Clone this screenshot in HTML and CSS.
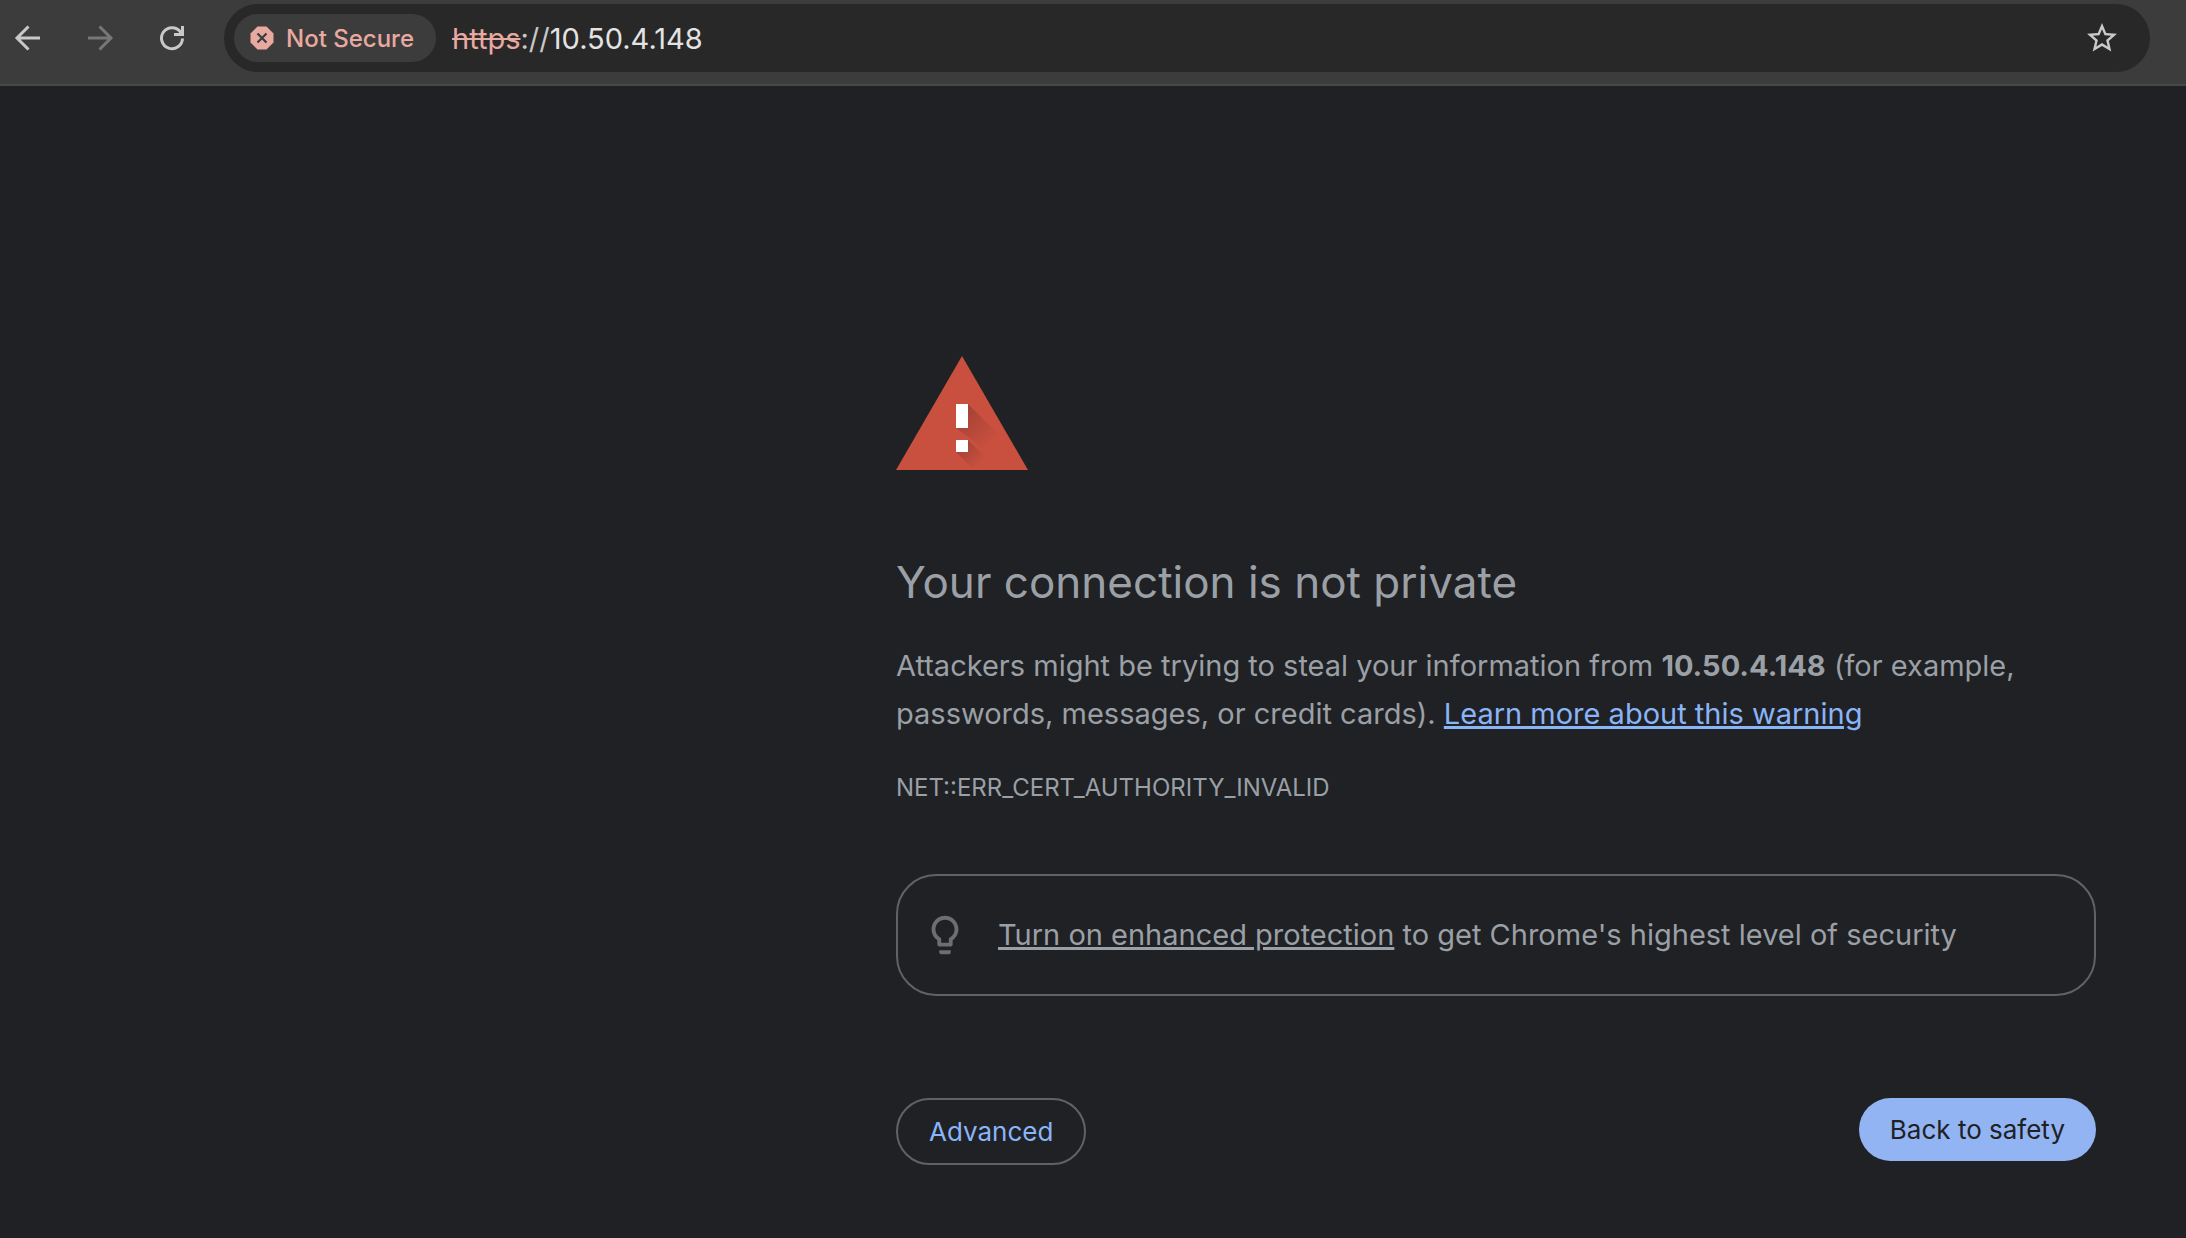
FILE: index.html
```
<!DOCTYPE html>
<html lang="en">
<head>
    <meta charset="UTF-8">
    <meta name="viewport" content="width=device-width, initial-scale=1.0">
    <title>Privacy error</title>
    <link rel="stylesheet" href="styles.css">
</head>

<body>
    <header class="toolbar">
        <nav class="nav-buttons">
            <button class="icon-button" type="button" aria-label="Back">
                <svg viewBox="0 0 36 36"><path d="M30 18H8M18.500 6.500L7 18l11.500 11.500" fill="none" stroke="currentColor" stroke-width="3"/></svg>
            </button>
            <button class="icon-button" type="button" aria-label="Forward" disabled>
                <svg viewBox="0 0 36 36"><path d="M6 18h22M17.500 6.500L29 18 17.500 29.500" fill="none" stroke="currentColor" stroke-width="3"/></svg>
            </button>
            <button class="icon-button" type="button" aria-label="Reload">
                <svg viewBox="0 0 36 36"><path d="M28.500 18.500A10.500 10.500 0 1 1 26.500 12L28 14M28.500 6v8.500H20" fill="none" stroke="currentColor" stroke-width="3"/></svg>
            </button>
        </nav>
        <div class="address-bar">
            <button class="security-chip" type="button">
                <svg class="chip-icon" viewBox="0 0 24 24">
                    <path d="M7.500 .5h9l7 7v9l-7 7h-9l-7-7v-9z" fill="#e8a9a1"/>
                    <path d="M7.500 7.500l9 9M16.500 7.500l-9 9" stroke="#3c3c3c" stroke-width="2.200"/>
                </svg>
                Not Secure
            </button>
            <div class="url" role="textbox" aria-label="Address" tabindex="0"><span class="scheme">https</span><span class="slashes">://</span>10.50.4.148</div>
            <button class="icon-button" type="button" aria-label="Bookmark this page">
                <svg viewBox="0 0 24 24"><path fill="currentColor" d="M22 9.240l-7.190-.62L12 2 9.190 8.630 2 9.240l5.460 4.730L5.820 21 12 17.270 18.180 21l-1.630-7.030L22 9.240zM12 15.400l-3.760 2.270 1-4.280-3.320-2.880 4.380-.38L12 6.100l1.710 4.040 4.380.38-3.320 2.880 1 4.280L12 15.400z"/></svg>
            </button>
        </div>
    </header>

    <main class="interstitial">
        <svg class="warning-icon" viewBox="0 0 132 114" role="img" aria-label="Warning">
            <defs>
                <linearGradient id="shade" gradientUnits="userSpaceOnUse" x1="66" y1="60" x2="94" y2="88">
                    <stop offset="0" stop-color="#8f3a30" stop-opacity=".6"/>
                    <stop offset="1" stop-color="#8f3a30" stop-opacity="0"/>
                </linearGradient>
                <linearGradient id="shade-dot" gradientUnits="userSpaceOnUse" x1="66" y1="90" x2="84" y2="108">
                    <stop offset="0" stop-color="#8f3a30" stop-opacity=".6"/>
                    <stop offset="1" stop-color="#8f3a30" stop-opacity="0"/>
                </linearGradient>
            </defs>
            <path d="M66 0l66 114H0z" fill="#c9503f"/>
            <path d="M72 48l36 36v24L60 72z" fill="url(#shade)"/>
            <path d="M72 84l30 30H78L60 96z" fill="url(#shade-dot)"/>
            <path d="M60 48h12v24H60zM60 84h12v12H60z" fill="#fff"/>
        </svg>

        <h1>Your connection is not private</h1>
        <p class="message">Attackers might be trying to steal your information from <strong>10.50.4.148</strong> (for example, passwords, messages, or credit cards). <a class="learn-more" href="#">Learn more about this warning</a></p>
        <div class="error-code">NET::ERR_CERT_AUTHORITY_INVALID</div>

        <div class="promo">
            <svg class="bulb" viewBox="0 0 24 24"><path fill="currentColor" d="M9 21c0 .5.4 1 1 1h4c.6 0 1-.5 1-1v-1H9v1zm3-19C8.100 2 5 5.100 5 9c0 2.400 1.200 4.500 3 5.700V17c0 .5.4 1 1 1h6c.6 0 1-.5 1-1v-2.300c1.800-1.300 3-3.400 3-5.700 0-3.900-3.100-7-7-7zm2.900 11.100l-.9.6V16h-4v-2.300l-.9-.6C7.800 12.200 7 10.600 7 9c0-2.800 2.200-5 5-5s5 2.200 5 5c0 1.600-.8 3.200-2.100 4.100z"/></svg>
            <p><a href="#">Turn on enhanced protection</a> to get Chrome's highest level of security</p>
        </div>

        <div class="actions">
            <button class="button secondary" type="button">Advanced</button>
            <button class="button primary" type="button">Back to safety</button>
        </div>
    </main>
</body>
</html>
```
FILE: styles.css
```
* {
    box-sizing: border-box;
}
body {
    margin: 0;
    min-height: 100vh;
    background-color: #202124;
    color: #9aa0a6;
    font-family: Inter, sans-serif;
}
button {
    font-family: inherit;
    cursor: pointer;
}

/* Browser toolbar */
.toolbar {
    display: flex;
    align-items: center;
    gap: 34px;
    padding: 4px 36px 12px 10px;
    background-color: #3c3c3c;
    border-bottom: 2px solid #474747;
}
.nav-buttons {
    display: flex;
    gap: 36px;
}
.icon-button {
    display: block;
    width: 36px;
    height: 36px;
    padding: 0;
    border: none;
    background: none;
    color: #c9c9c9;
}
.icon-button:disabled {
    color: #777;
}
.icon-button svg {
    display: block;
    width: 100%;
}
.address-bar {
    flex: 1;
    display: flex;
    align-items: center;
    gap: 16px;
    padding: 10px 30px 10px 10px;
    border-radius: 34px;
    background-color: #282828;
}
.security-chip {
    display: flex;
    align-items: center;
    gap: 12px;
    height: 48px;
    padding: 0 22px 0 16px;
    border: none;
    border-radius: 24px;
    background-color: #3c3c3c;
    color: #e8a9a1;
    font-size: 24px;
    font-weight: 500;
}
.chip-icon {
    width: 24px;
    height: 24px;
}
.url {
    flex: 1;
    color: #e3e3e3;
    font-size: 29px;
}
.scheme {
    color: #e8a9a1;
    text-decoration: line-through;
}
.slashes {
    color: #c7c7c7;
}

/* Warning page */
.interstitial {
    width: 1200px;
    max-width: 90%;
    margin: 270px 90px 0 auto;
}
.interstitial a {
    text-decoration-thickness: 3px;
}
.warning-icon {
    display: block;
    width: 132px;
    height: 114px;
}
h1 {
    margin: 80px 0 28px;
    font-size: 44px;
    font-weight: 400;
    line-height: 64px;
}
.message {
    margin: 0;
    font-size: 29px;
    line-height: 48px;
}
.learn-more {
    color: #8ab4f8;
}
.error-code {
    margin-top: 34px;
    font-size: 24px;
    line-height: 32px;
}
.promo {
    display: flex;
    align-items: center;
    gap: 30px;
    margin-top: 70px;
    padding: 36px 24px;
    border: 2px solid #5f6368;
    border-radius: 40px;
    font-size: 29px;
    line-height: 46px;
}
.promo p {
    margin: 0;
}
.promo a {
    color: inherit;
}
.bulb {
    flex: none;
    width: 46px;
    height: 46px;
    color: #6e6e6e;
}
.actions {
    display: flex;
    align-items: flex-start;
    justify-content: space-between;
    margin-top: 102px;
}
.button {
    padding: 15px 31px;
    border: none;
    border-radius: 34px;
    font-size: 26px;
    line-height: 33px;
}
.secondary {
    border: 2px solid #5f6368;
    background: none;
    color: #8ab4f8;
}
.primary {
    background-color: #93b4f2;
    color: #202124;
}
```
